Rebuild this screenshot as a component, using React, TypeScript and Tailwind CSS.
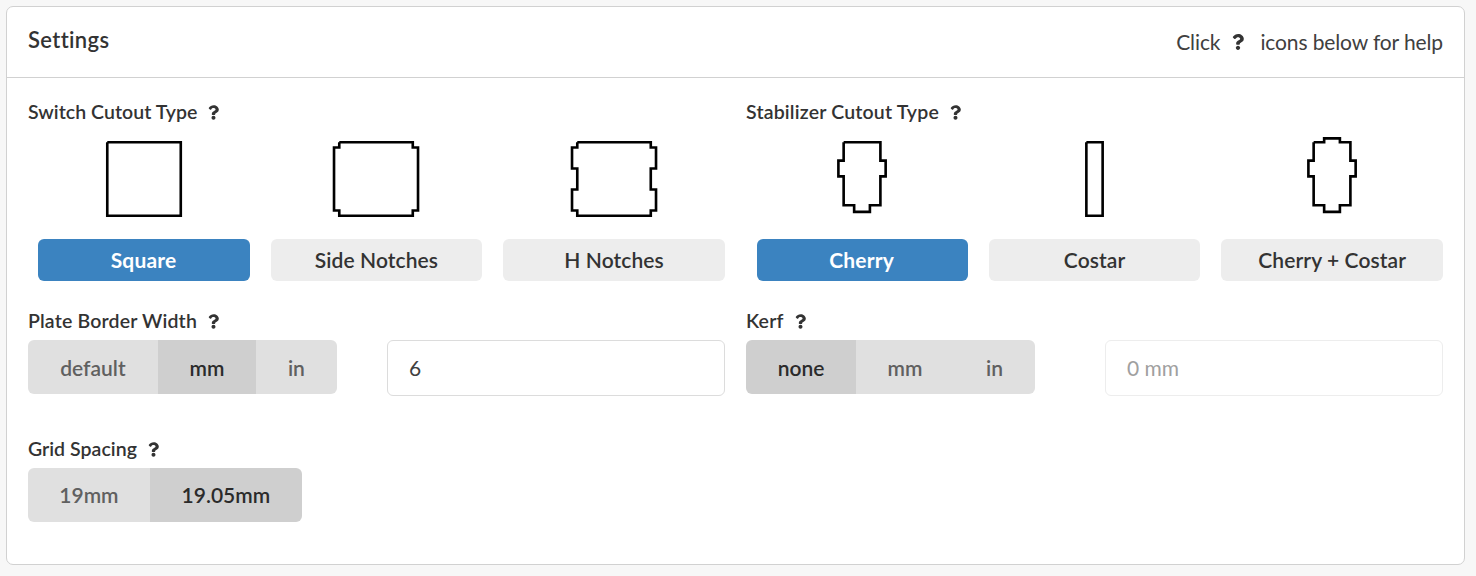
import { FaQuestion } from "react-icons/fa";

type Point = [number, number];

// Cutout outlines in millimetres, measured from the cutout's centre.
const mirror = (right: Point[]): Point[] => [
  ...right,
  ...right.map(([x, y]): Point => [-x, y]).reverse(),
];

const open = (right: Point[]): Point[] => {
  const all = mirror(right);
  return [all[all.length - 1], ...all];
};

const outlines: Record<string, Point[]> = {
  Square: open([[7, -7], [7, 7]]),
  "Side Notches": open([[7, -7], [7, -6], [8, -6], [8, 6], [7, 6], [7, 7]]),
  "H Notches": open([
    [7, -7], [7, -6], [8, -6], [8, -2], [7, -2], [7, 2], [8, 2], [8, 6], [7, 6], [7, 7],
  ]),
  Cherry: open([
    [3.5, -7], [3.5, -3.5], [4.5, -3.5], [4.5, -0.5], [3.5, -0.5], [3.5, 5], [1.5, 5], [1.5, 6.25],
  ]),
  Costar: open([[1.55, -7], [1.55, 7]]),
  "Cherry + Costar": [
    [-3.5, -7],
    [-1.5, -7],
    [-1.5, -7.75],
    ...mirror([
      [1.5, -7.75], [1.5, -7], [3.5, -7], [3.5, -3.5], [4.5, -3.5], [4.5, -0.5], [3.5, -0.5],
      [3.5, 5], [1.5, 5], [1.5, 6.25],
    ]).slice(0, -2),
  ],
};

function Outline({ name }: { name: string }) {
  return (
    <svg
      className={name === "Costar" ? "h-[84px] w-[105px]" : "mr-px h-[84px] w-[105px]"}
      viewBox={name === "Costar" ? "-10 -8 20 16" : "-10.1 -8 20 16"}
      fill="none"
      stroke="#000"
      strokeWidth="0.5"
    >
      <polyline points={outlines[name].map((p) => p.join(",")).join(" ")} />
    </svg>
  );
}

function Label({ text, tracking = "tracking-[0.05px]" }: { text: string; tracking?: string }) {
  return (
    <div className="flex h-[22px] items-center text-[19.5px] leading-[22px] font-semibold">
      <span className={tracking}>{text}</span>
      <FaQuestion className="ml-[11px] h-[15px] w-[11px]" />
    </div>
  );
}

function Choices({ options }: { options: string[] }) {
  return (
    <div className="grid grid-cols-3">
      {options.map((name, i) => (
        <div key={name} className="flex flex-col pr-[10.5px] pl-[10.5px] last:pr-0">
          <div className="flex h-[102px] justify-center">
            <Outline name={name} />
          </div>
          <button
            className={
              i === 0
                ? "h-[42px] rounded-[6px] bg-[#3b83c0] pr-px font-bold tracking-[0.2px] text-white"
                : "h-[42px] rounded-[6px] bg-[#ededed] font-semibold tracking-[0.1px]"
            }
          >
            {name}
          </button>
        </div>
      ))}
    </div>
  );
}

function Segmented({
  items,
  pad = "",
}: {
  items: { text: string; width: string; active?: boolean }[];
  pad?: string;
}) {
  return (
    <div className="flex h-[54px] overflow-hidden rounded-[6px] font-semibold">
      {items.map((it) => (
        <button
          key={it.text}
          className={`${it.width} ${pad} ${it.active ? "bg-[#cfcfcf] text-[#2b2b2b]" : "bg-[#e0e0e0] text-[#606060]"}`}
        >
          {it.text}
        </button>
      ))}
    </div>
  );
}

export default function App() {
  return (
    <div className="h-[576px] bg-[#f7f7f7] pt-[6px] pl-[6px] font-[Lato,sans-serif] text-[21px] text-[#333] [font-variant-ligatures:none]">
      <section className="h-[559px] w-[1459px] rounded-[7px] border border-[#d1d1d1] bg-white">
        <header className="flex h-[71px] justify-between border-b border-[#d1d1d1] px-[21px]">
          <h1 className="pt-[17px] text-[22px] leading-[32px] font-semibold tracking-[0.35px]">Settings</h1>
          <p className="flex items-center text-[21px] tracking-[-0.1px] text-[#404040]">
            Click
            <FaQuestion className="mr-[16px] ml-[12px] h-[16px] w-[12px] text-[#333]" />
            <span className="tracking-[-0.12px]">icons below for help</span>
          </p>
        </header>
        <div className="grid grid-cols-2 gap-x-[21px] px-[20.9px] pt-[23px]">
          <div>
            <Label text="Switch Cutout Type" />
            <div className="mt-[14px]">
              <Choices options={["Square", "Side Notches", "H Notches"]} />
            </div>
          </div>
          <div>
            <Label text="Stabilizer Cutout Type" tracking="tracking-[0.18px]" />
            <div className="mt-[14px]">
              <Choices options={["Cherry", "Costar", "Cherry + Costar"]} />
            </div>
          </div>
          <div className="pt-[29px]">
            <Label text="Plate Border Width" tracking="tracking-[0.17px]" />
            <div className="mt-[8px] flex items-start justify-between">
              <Segmented
                pad="pt-[2px]"
                items={[
                  { text: "default", width: "w-[130px]" },
                  { text: "mm", width: "w-[98px]", active: true },
                  { text: "in", width: "w-[81px]" },
                ]}
              />
              <input
                className="h-[56px] w-[338px] rounded-[6px] border border-[#dcdcdc] px-[21px] pb-[2px] text-[#404040]"
                defaultValue="6"
              />
            </div>
          </div>
          <div className="pt-[29px]">
            <Label text="Kerf" tracking="tracking-[0.2px]" />
            <div className="mt-[8px] flex items-start justify-between">
              <Segmented
                pad="pt-[2px]"
                items={[
                  { text: "none", width: "w-[110px]", active: true },
                  { text: "mm", width: "w-[98px]" },
                  { text: "in", width: "w-[81px]" },
                ]}
              />
              <input
                className="h-[56px] w-[338px] rounded-[6px] border border-[#ededed] px-[21px] pb-[2px] tracking-[-0.1px] text-[#a0a0a0]"
                defaultValue="0 mm"
                disabled
              />
            </div>
          </div>
          <div className="pt-[42px]">
            <Label text="Grid Spacing" />
            <div className="mt-[8px] flex">
              <Segmented
                items={[
                  { text: "19mm", width: "w-[122px]" },
                  { text: "19.05mm", width: "w-[152px]", active: true },
                ]}
              />
            </div>
          </div>
        </div>
      </section>
    </div>
  );
}
